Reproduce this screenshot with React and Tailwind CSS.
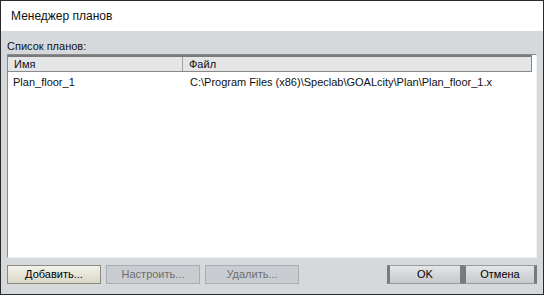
import React from "react";

const Button = ({ children, disabled, primary, className = "" }) => (
  <button
    className={`h-[19px] border text-[11px] font-normal leading-none ${
      disabled
        ? "border-[#a9adb1] bg-[#c9cdd1] text-[#6d6d6d]"
        : primary
        ? "border-[#8a8a80] bg-gradient-to-b from-[#f4f3ea] to-[#d9d7c6] text-black"
        : "border-x-[3px] border-y border-x-[#7a7a7a] border-y-[#9a9a9a] bg-gradient-to-b from-[#e4e6e8] to-[#c6c9cc] text-black"
    } ${className}`}
  >
    {children}
  </button>
);

const App = () => {
  return (
    <div
      className="w-[544px] h-[295px] border border-[#2a2a2a] bg-[#d5d9dc] flex flex-col"
      style={{ fontFamily: '"Liberation Sans", Arial, sans-serif' }}
    >
      <div className="h-[30px] bg-white flex items-center pl-[10px] text-[12px] text-[#111]">
        Менеджер планов
      </div>
      <div className="flex-1 flex flex-col px-[6px] pt-[8px] pb-[8px]">
        <p className="text-[11px] leading-[14px] text-[#111]">Список планов:</p>
        <div className="mt-[1px] h-[204px] border border-[#8a8a8a] border-r-[#f0f0f0] border-b-[#f0f0f0] bg-white flex flex-col">
          <div className="flex h-[17px] bg-[#e3e5e7] border-t-[2px] border-[#7a7a7a] text-[11px] leading-none text-[#111] mr-[4px] border-r border-b border-r-[#888] border-b-[#888] border-l-0">
            <div className="w-[175px] border-r border-[#a0a0a0] pl-[6px] flex items-center">Имя</div>
            <div className="flex-1 pl-[6px] flex items-center">Файл</div>
          </div>
          <div className="flex h-[20px] items-center text-[11px] text-[#111]">
            <div className="w-[176px] pl-[5px]">Plan_floor_1</div>
            <div className="flex-1 pl-[6px]">
              C:\Program Files (x86)\Speclab\GOALcity\Plan\Plan_floor_1.x
            </div>
          </div>
        </div>
        <div className="mt-[7px] flex items-center">
          <Button primary className="w-[94px]">Добавить...</Button>
          <Button disabled className="w-[94px] ml-[5px]">Настроить...</Button>
          <Button disabled className="w-[94px] ml-[5px]">Удалить...</Button>
          <Button className="w-[76px] ml-auto">OK</Button>
          <Button className="w-[74px]">Отмена</Button>
        </div>
      </div>
    </div>
  );
};

export default App;
